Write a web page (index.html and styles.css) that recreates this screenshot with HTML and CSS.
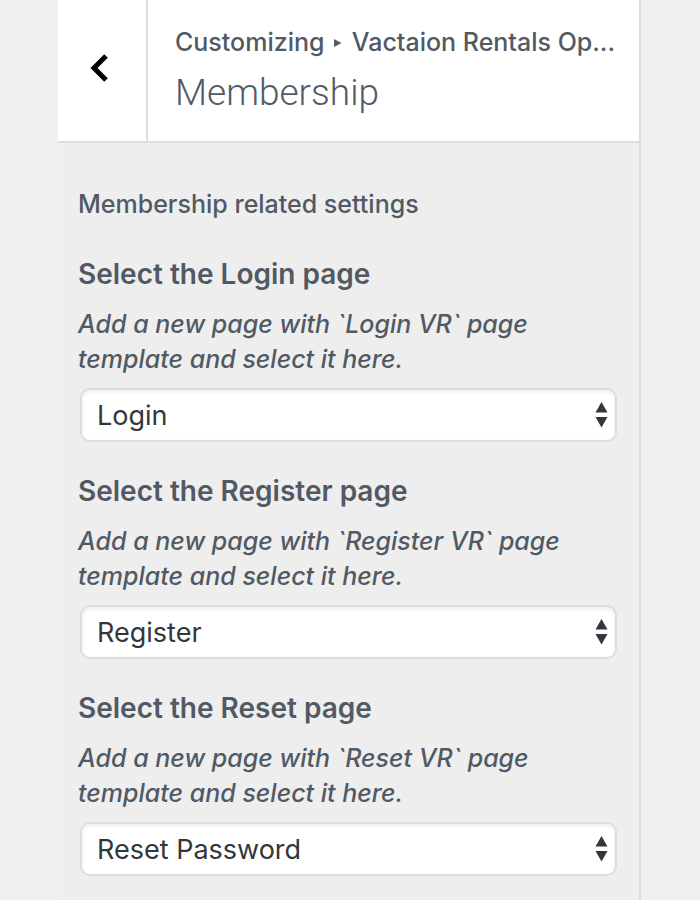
FILE: index.html
```html
<!DOCTYPE html>
<html lang="en">
<head>
<meta charset="utf-8">
<title>Membership</title>
<link rel="stylesheet" href="styles.css">
</head>
<body>
<main class="panel">
  <header class="panel-header">
    <button class="back" type="button" aria-label="Back">
      <svg class="back-icon" width="18" height="28" viewBox="0 0 18 28" aria-hidden="true"><path d="M16 2 4 14 16 26" fill="none" stroke="#000" stroke-width="5"/></svg>
    </button>
    <div class="heading">
      <p class="crumbs">Customizing <svg class="crumb-arrow" width="8" height="10" viewBox="0 0 8 10" aria-hidden="true"><path d="M0 1 7.500 5 0 9z" fill="#555d66"/></svg> Vactaion Rentals Op...</p>
      <h1 class="title">Membership</h1>
    </div>
  </header>
  <form class="settings">
    <p class="intro">Membership related settings</p>
    <div class="field">
      <label class="label" for="login">Select the Login page</label>
      <p class="hint">Add a new page with `Login VR` page template and select it here.</p>
      <div class="picker">
        <select class="select" id="login"><option>Login</option></select>
        <svg class="arrows" width="13" height="26" viewBox="0 0 13 26" aria-hidden="true"><path d="M6.500 0 12.500 10.500H.5zM.5 15h12L6.500 25.500z" fill="#32373c"/></svg>
      </div>
    </div>
    <div class="field">
      <label class="label" for="register">Select the Register page</label>
      <p class="hint">Add a new page with `Register VR` page template and select it here.</p>
      <div class="picker">
        <select class="select" id="register"><option>Register</option></select>
        <svg class="arrows" width="13" height="26" viewBox="0 0 13 26" aria-hidden="true"><path d="M6.500 0 12.500 10.500H.5zM.5 15h12L6.500 25.500z" fill="#32373c"/></svg>
      </div>
    </div>
    <div class="field">
      <label class="label" for="reset">Select the Reset page</label>
      <p class="hint">Add a new page with `Reset VR` page template and select it here.</p>
      <div class="picker">
        <select class="select" id="reset"><option>Reset Password</option></select>
        <svg class="arrows" width="13" height="26" viewBox="0 0 13 26" aria-hidden="true"><path d="M6.500 0 12.500 10.500H.5zM.5 15h12L6.500 25.500z" fill="#32373c"/></svg>
      </div>
    </div>
  </form>
</main>
</body>
</html>
```
FILE: styles.css
```css
* { box-sizing: border-box; }

body {
  margin: 0;
  background: #f0f0f0;
  color: #515a64;
  font: 500 25px/35px Inter, "Liberation Sans", sans-serif;
}

p, h1 { margin: 0; }

.panel {
  min-height: 100vh;
  margin: 0 59px 0 58px;
  background: #eee;
  border-right: 2px solid #ddd;
}

.panel-header {
  display: flex;
  background: #fff;
  border-bottom: 2px solid #ddd;
}

.back {
  display: flex;
  flex: none;
  align-items: center;
  justify-content: center;
  width: 90px;
  padding: 0 6px 6px 0;
  background: #fff;
  border: 0;
  border-right: 2px solid #ddd;
}

.heading {
  flex: 1;
  min-width: 0;
  padding: 25px 20px 23px 27px;
}

.crumbs {
  overflow: hidden;
  text-overflow: ellipsis;
  white-space: nowrap;
}

.crumb-arrow {
  margin: 0 3px;
  vertical-align: 3px;
}

.title {
  padding-top: 8px;
  font-family: Roboto, "Liberation Sans", sans-serif;
  font-size: 37px;
  font-weight: 300;
  line-height: 50px;
}

.settings {
  display: flex;
  flex-direction: column;
  gap: 32px;
  padding: 44px 20px 24px;
}

.intro { margin-bottom: 3px; }

.label {
  display: block;
  font-size: 28px;
  font-weight: 600;
}

.hint {
  margin: 15px 0 11px;
  font-style: italic;
}

.picker {
  position: relative;
  margin: 0 2px;
}

.select {
  display: block;
  width: 100%;
  height: 54px;
  padding: 0 48px 0 15px;
  appearance: none;
  background: #fff;
  border: 2px solid #ddd;
  border-radius: 10px;
  box-shadow: inset 0 2px 4px rgba(0, 0, 0, 0.07);
  color: #32373c;
  font: inherit;
  font-size: 27px;
  font-weight: 400;
}

.arrows {
  position: absolute;
  top: 14px;
  right: 9px;
  pointer-events: none;
}
```
